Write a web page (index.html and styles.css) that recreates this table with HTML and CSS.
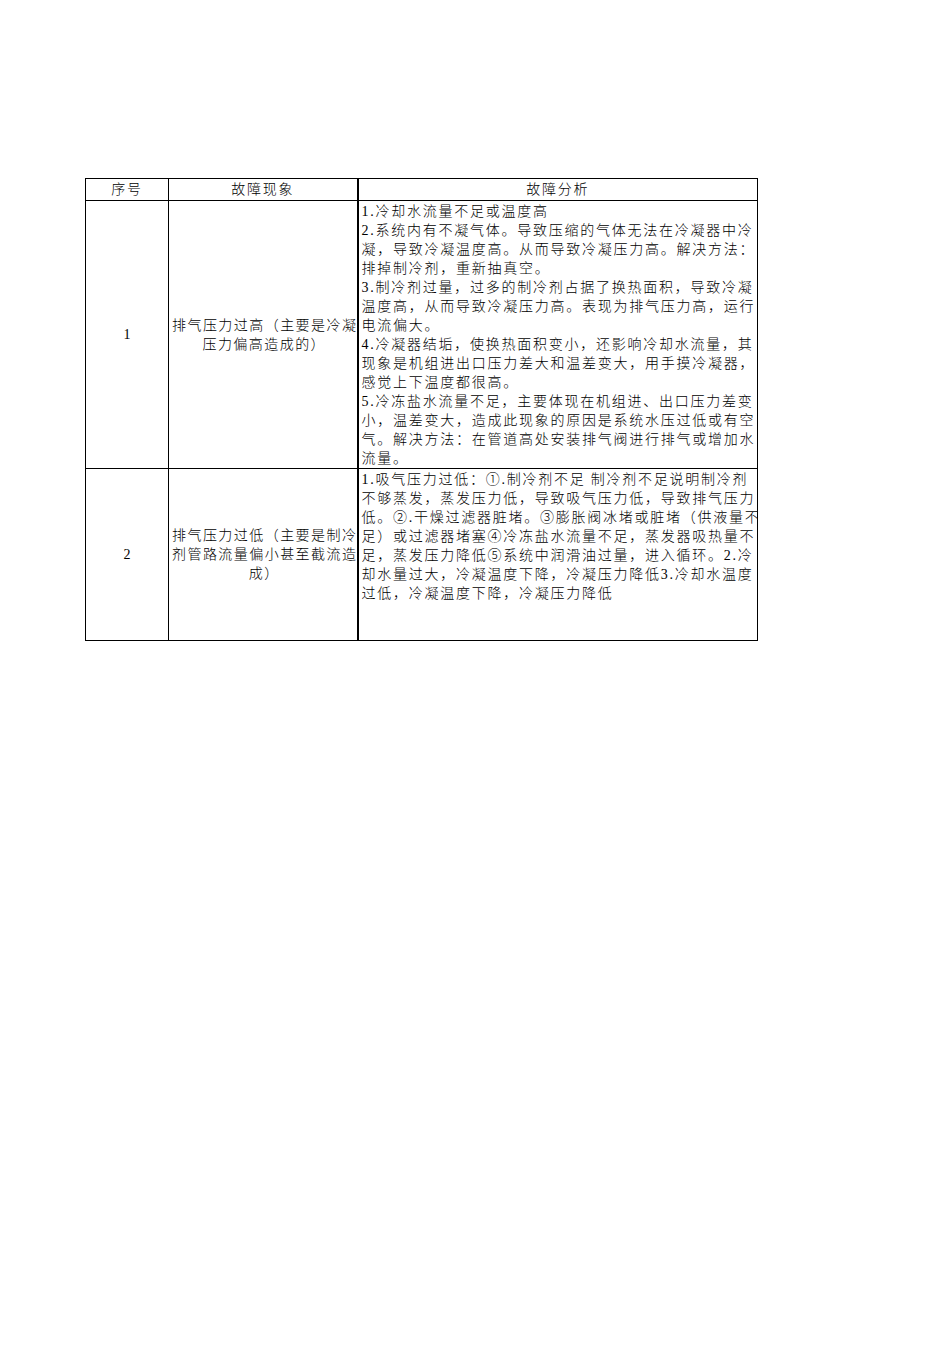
FILE: index.html
```html
<!DOCTYPE html>
<html lang="zh-CN">
<head>
<meta charset="utf-8">
<title>故障分析</title>
<link rel="stylesheet" href="styles.css">
</head>
<body>
<table class="sheet">
  <colgroup>
    <col class="c-no">
    <col class="c-sym">
    <col class="c-ana">
  </colgroup>
  <tr class="head">
    <td>序号</td>
    <td>故障现象</td>
    <td class="ana">故障分析</td>
  </tr>
  <tr class="r1">
    <td class="no">1</td>
    <td class="sym">排气压力过高（主要是冷凝<br>压力偏高造成的）</td>
    <td class="ana txt">1.冷却水流量不足或温度高<br>2.系统内有不凝气体。导致压缩的气体无法在冷凝器中冷<br>凝，导致冷凝温度高。从而导致冷凝压力高。解决方法：<br>排掉制冷剂，重新抽真空。<br>3.制冷剂过量，过多的制冷剂占据了换热面积，导致冷凝<br>温度高，从而导致冷凝压力高。表现为排气压力高，运行<br>电流偏大。<br>4.冷凝器结垢，使换热面积变小，还影响冷却水流量，其<br>现象是机组进出口压力差大和温差变大，用手摸冷凝器，<br>感觉上下温度都很高。<br>5.冷冻盐水流量不足，主要体现在机组进、出口压力差变<br>小，温差变大，造成此现象的原因是系统水压过低或有空<br>气。解决方法：在管道高处安装排气阀进行排气或增加水<br>流量。</td>
  </tr>
  <tr class="r2">
    <td class="no">2</td>
    <td class="sym">排气压力过低（主要是制冷<br>剂管路流量偏小甚至截流造<br>成）</td>
    <td class="ana txt">1.吸气压力过低：①.制冷剂不足 制冷剂不足说明制冷剂<br>不够蒸发，蒸发压力低，导致吸气压力低，导致排气压力<br>低。②.干燥过滤器脏堵。③膨胀阀冰堵或脏堵（供液量不<br>足）或过滤器堵塞④冷冻盐水流量不足，蒸发器吸热量不<br>足，蒸发压力降低⑤系统中润滑油过量，进入循环。2.冷<br>却水量过大，冷凝温度下降，冷凝压力降低3.冷却水温度<br>过低，冷凝温度下降，冷凝压力降低</td>
  </tr>
</table>
</body>
</html>
```

FILE: styles.css
```css
html, body {
  margin: 0;
  padding: 0;
  background: #ffffff;
}

body {
  font-family: "Liberation Serif", "Noto Sans CJK SC", serif;
  color: #000000;
}

.sheet {
  border-collapse: collapse;
  table-layout: fixed;
  width: 672px;
  margin: 178px 0 0 85px;
  font-size: 14px;
  line-height: 19px;
  font-weight: 300;
}

.c-no { width: 83px; }
.c-sym { width: 189px; }
.c-ana { width: 400px; }

.sheet td {
  border: 1px solid #000000;
  padding: 0;
  overflow: hidden;
  white-space: nowrap;
  text-align: center;
  vertical-align: middle;
  letter-spacing: 1.7px;
}

.sheet td.ana {
  border-left: 2px solid #000000;
}

.head td {
  height: 21px;
  line-height: 21px;
}

.r1 td {
  height: 264px;
}

.r2 td {
  height: 170px;
}

.sheet td.no {
  letter-spacing: 0;
}

.sheet td.sym {
  padding: 0 0 0 3px;
  letter-spacing: 1.45px;
}

.sheet td.txt {
  text-align: left;
  vertical-align: top;
  padding: 1px 0 0 3px;
  letter-spacing: 1.75px;
}
```
